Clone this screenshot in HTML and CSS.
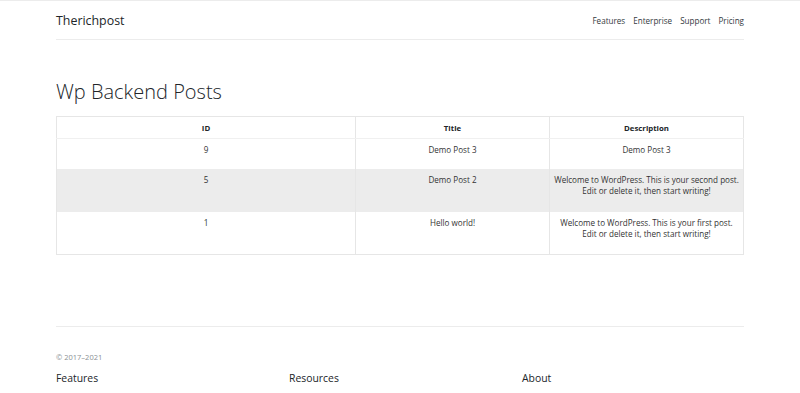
FILE: index.html
```html
<!DOCTYPE html>
<html>
<head>
<meta charset="utf-8">
<link rel="stylesheet" href="styles.css">
</head>
<body>
<div class="topbar">
  <div class="container header">
    <h5 class="brand">Therichpost</h5>
    <nav class="nav">
      <a href="#">Features</a>
      <a href="#">Enterprise</a>
      <a href="#">Support</a>
      <a href="#">Pricing</a>
    </nav>
  </div>
</div>
<main class="container">
  <h1 class="title">Wp Backend Posts</h1>
  <table class="posts">
    <thead>
      <tr><th class="c1">ID</th><th class="c2">Title</th><th class="c3">Description</th></tr>
    </thead>
    <tbody>
      <tr class="r-short"><td>9</td><td>Demo Post 3</td><td>Demo Post 3</td></tr>
      <tr class="r-tall hl"><td>5</td><td>Demo Post 2</td><td>Welcome to WordPress. This is your second post. Edit or delete it, then start writing!</td></tr>
      <tr class="r-tall"><td>1</td><td>Hello world!</td><td>Welcome to WordPress. This is your first post. Edit or delete it, then start writing!</td></tr>
    </tbody>
  </table>
</main>
<footer class="container footer">
  <div class="copy">© 2017–2021</div>
  <div class="cols">
    <div class="col"><h5>Features</h5><a href="#">Cool stuff</a></div>
    <div class="col"><h5>Resources</h5><a href="#">Resource</a></div>
    <div class="col"><h5>About</h5><a href="#">Team</a></div>
  </div>
</footer>
</body>
</html>
```
FILE: styles.css
```css
* { box-sizing: border-box; }
html, body { margin: 0; padding: 0; background: #fff; }
body {
  font-family: "Open Sans", "Noto Sans", sans-serif;
  color: #212529;
  width: 800px;
  height: 393px;
  overflow: hidden;
}
.container {
  width: 688px;
  margin: 0 auto;
}
.topbar {
  border-top: 1px solid #ececec;
}
.header {
  height: 39px;
  border-bottom: 1px solid #ececec;
  display: flex;
  align-items: center;
  justify-content: space-between;
}
.brand {
  margin: 0;
  font-size: 12.4px;
  font-weight: 400;
  color: #212529;
}
.nav {
  display: flex;
  gap: 8px;
}
.nav a {
  font-size: 8.1px;
  color: #343a40;
  text-decoration: none;
}
.title {
  margin: 39px 0 11px;
  font-size: 20px;
  font-weight: 300;
  line-height: 26px;
  color: #212529;
}
.posts {
  width: 687px;
  border-collapse: collapse;
  border: 1px solid #e6e6e6;
  font-size: 8.1px;
  color: #333;
  table-layout: fixed;
}
.posts th, .posts td {
  border-left: 1px solid #e6e6e6;
  text-align: center;
  vertical-align: top;
  line-height: 11.5px;
}
.posts th {
  font-size: 7.8px;
  font-weight: 700;
  color: #212529;
  height: 22px;
  padding: 6px 3px 0;
  border-bottom: 1px solid #f0f0f0;
}
.posts td { padding: 5px 3px 0; }
.c1 { width: 299px; }
.c2 { width: 194px; }
.c3 { width: 194px; }
.r-short td { height: 30px; }
.r-tall td { height: 43px; }
.hl td { background: #ececec; }
.footer {
  margin-top: 71px;
  border-top: 1px solid #ececec;
  padding-top: 25px;
}
.copy {
  font-size: 7.5px;
  color: #8a8f94;
  margin-bottom: 9px;
}
.cols {
  display: flex;
}
.col { flex: 0 0 233px; }
.col h5 {
  margin: 0 0 6px;
  font-size: 10.4px;
  font-weight: 500;
  color: #212529;
}
.col a {
  font-size: 8.5px;
  color: #6c757d;
  text-decoration: none;
}
```
